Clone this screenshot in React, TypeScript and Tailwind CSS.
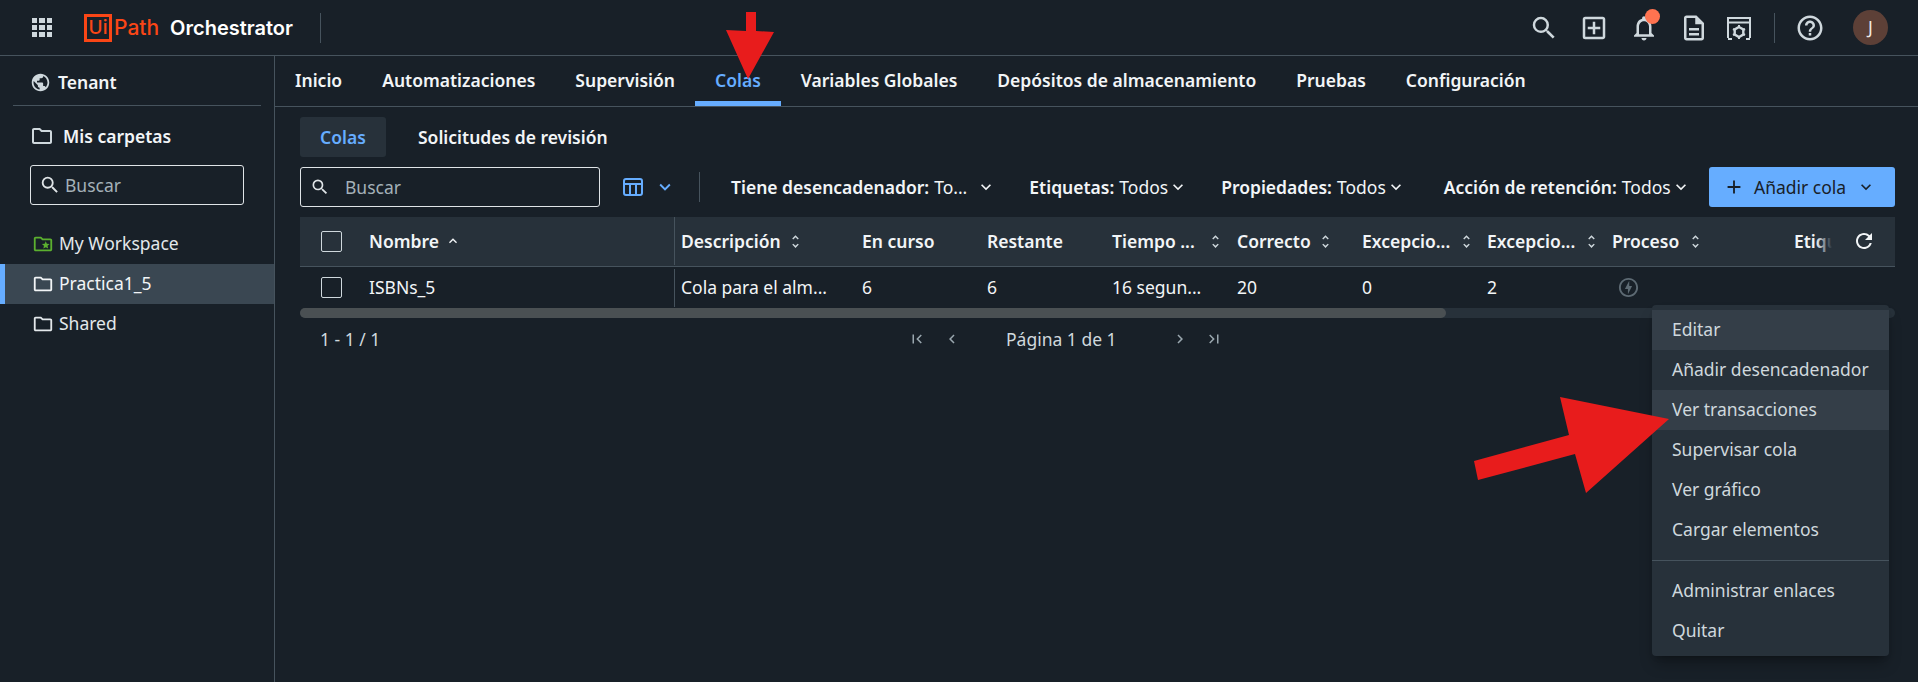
import type { ReactNode } from 'react'
import {
  MdAdd,
  MdChevronLeft,
  MdChevronRight,
  MdFirstPage,
  MdKeyboardArrowDown,
  MdKeyboardArrowUp,
  MdLastPage,
  MdOutlineAddBox,
  MdOutlineDescription,
  MdOutlineFolder,
  MdOutlineFolderSpecial,
  MdOutlineHelpOutline,
  MdOutlineNotifications,
  MdOutlineOfflineBolt,
  MdPublic,
  MdRefresh,
  MdSearch,
  MdUnfoldMore,
} from 'react-icons/md'

function AppsIcon() {
  return (
    <div className="grid w-5 grid-cols-3 gap-[2px]">
      {Array.from({ length: 9 }).map((_, i) => (
        <div key={i} className="h-[5px] w-[5.3px] bg-[#cfd8dd]" />
      ))}
    </div>
  )
}

function SystemIcon() {
  return (
    <svg viewBox="0 0 24 24" className="h-[24px] w-[24px] text-[#cfd8dd]" fill="none" stroke="currentColor" strokeWidth="2">
      <path d="M1 22V2h22v20" />
      <path d="M1 6.5h22" />
      <path d="M1 23h4M19 23h4" />
      <polygon points="12,11 16.3,13.5 16.3,18.5 12,21 7.7,18.5 7.7,13.5" strokeWidth="2.4" />
      <path d="M12 9v2M12 21v2M6 13l2 1M18 13l-2 1M6 19l2-1M18 19l-2-1" strokeWidth="2" />
    </svg>
  )
}

function Logo() {
  return (
    <div className="flex items-center font-['Inter',sans-serif] font-medium text-[#fa4616]">
      <span className="flex h-[28px] w-[28px] items-center justify-center border-[3px] border-[#fa4616] text-[19px] leading-none">
        Ui
      </span>
      <span className="ml-[2px] text-[21px] leading-none">Path</span>
    </div>
  )
}

function TopBar() {
  return (
    <header className="flex h-[56px] shrink-0 items-center border-b border-[#46535d] pl-[32px] pr-[30px]">
      <AppsIcon />
      <div className="ml-[32px]">
        <Logo />
      </div>
      <span className="ml-[11px] font-['Inter',sans-serif] text-[20px] font-semibold text-white">Orchestrator</span>
      <div className="ml-[27px] h-[30px] w-px bg-[#46535d]" />
      <div className="ml-auto flex items-center text-[#cfd8dd]">
        <MdSearch className="h-[30px] w-[30px]" />
        <MdOutlineAddBox className="ml-[20px] h-[30px] w-[30px]" />
        <div className="relative ml-[20px]">
          <MdOutlineNotifications className="h-[30px] w-[30px]" />
          <div className="absolute right-[-1px] top-[-4px] h-[15px] w-[15px] rounded-full bg-[#ff7350]" />
        </div>
        <MdOutlineDescription className="ml-[20px] h-[30px] w-[30px]" />
        <div className="ml-[18px]">
          <SystemIcon />
        </div>
        <div className="ml-[23px] h-[30px] w-px bg-[#46535d]" />
        <MdOutlineHelpOutline className="ml-[20px] h-[30px] w-[30px]" />
        <div className="ml-[28px] flex h-[35px] w-[35px] items-center justify-center rounded-full bg-[#5d4037] text-[17.5px] text-[#f0e9e6]">
          J
        </div>
      </div>
    </header>
  )
}

function FolderRow({ icon, label, active }: { icon: ReactNode; label: string; active?: boolean }) {
  return (
    <div
      className={`flex h-[40px] items-center gap-[5px] border-l-[5px] pb-[1px] pl-[27px] text-[17.5px] ${
        active ? 'border-[#66adff] bg-[#3a4752] text-[#f2f5f7]' : 'border-transparent text-[#e3e8eb]'
      }`}
    >
      {icon}
      {label}
    </div>
  )
}

function Sidebar() {
  return (
    <aside className="flex w-[275px] shrink-0 flex-col border-r border-[#46535d]">
      <div className="mx-[13px] flex h-[50px] items-center gap-[7px] border-b border-[#46535d] pl-[17px] pt-[3px] text-[17.5px] font-semibold text-[#f2f5f7]">
        <MdPublic className="h-[21px] w-[21px] text-[#cfd8dd]" />
        Tenant
      </div>
      <div className="mt-[10px] flex h-[40px] items-center gap-[9px] pl-[30px] text-[17.5px] font-semibold text-[#f2f5f7]">
        <MdOutlineFolder className="h-[24px] w-[24px] text-[#cfd8dd]" />
        Mis carpetas
      </div>
      <div className="mx-[30px] mt-[9px] flex h-[40px] items-center gap-[4px] rounded-[3px] border border-[#dfe4e7] pl-[8px] text-[17.5px] text-[#a4b1b8]">
        <MdSearch className="h-[22px] w-[22px] text-[#dfe4e7]" />
        Buscar
      </div>
      <div className="mt-[19px]">
        <FolderRow label="My Workspace" icon={<MdOutlineFolderSpecial className="h-[22px] w-[22px] text-[#5bb02f]" />} />
        <FolderRow label="Practica1_5" active icon={<MdOutlineFolder className="h-[22px] w-[22px] text-[#f2f5f7]" />} />
        <FolderRow label="Shared" icon={<MdOutlineFolder className="h-[22px] w-[22px] text-[#e3e8eb]" />} />
      </div>
    </aside>
  )
}

const mainTabs = [
  'Inicio',
  'Automatizaciones',
  'Supervisión',
  'Colas',
  'Variables Globales',
  'Depósitos de almacenamiento',
  'Pruebas',
  'Configuración',
]

function MainTabs() {
  return (
    <nav className="flex h-[51px] shrink-0 border-b border-[#46535d]">
      {mainTabs.map((tab) => (
        <div
          key={tab}
          className={`flex items-center border-b-[5px] px-[20px] pt-[4px] text-[17.5px] font-semibold ${
            tab === 'Colas' ? 'border-[#66adff] text-[#66adff]' : 'border-transparent text-[#f2f5f7]'
          }`}
        >
          {tab}
        </div>
      ))}
    </nav>
  )
}

function Filter({ name, value, className, chevronGap = '' }: { name: string; value: string; className: string; chevronGap?: string }) {
  return (
    <div className={`flex items-center text-[17.5px] text-[#f2f5f7] ${className}`}>
      <span className="font-semibold">{name}:</span>
      <span className="ml-[5px]">{value}</span>
      <MdKeyboardArrowDown className={`h-[20px] w-[20px] ${chevronGap}`} />
    </div>
  )
}

function Toolbar() {
  return (
    <div className="mt-[10px] flex h-[40px] items-center">
      <div className="flex h-[40px] w-[300px] items-center rounded-[3px] border border-[#dfe4e7] pl-[9px] text-[17.5px] text-[#a4b1b8]">
        <MdSearch className="h-[20px] w-[20px] text-[#dfe4e7]" />
        <span className="ml-[15px]">Buscar</span>
      </div>
      <svg viewBox="0 0 20 20" className="ml-[23px] h-[20px] w-[20px] text-[#66adff]" fill="none" stroke="currentColor" strokeWidth="2">
        <rect x="1" y="2" width="18" height="16" rx="2" />
        <path d="M1 7h18M7 7v11M13 7v11" />
      </svg>
      <MdKeyboardArrowDown className="ml-[11px] h-[22px] w-[22px] text-[#66adff]" />
      <div className="ml-[23px] h-[30px] w-px bg-[#46535d]" />
      <Filter name="Tiene desencadenador" value="To..." className="ml-[31px]" chevronGap="ml-[9px]" />
      <Filter name="Etiquetas" value="Todos" className="ml-[33px]" />
      <Filter name="Propiedades" value="Todos" className="ml-[33px]" />
      <Filter name="Acción de retención" value="Todos" className="ml-[38px]" />
      <div className="ml-auto flex h-[40px] w-[186px] items-center rounded-[3px] bg-[#66adff] pl-[14px] text-[17.5px] text-[#182028]">
        <MdAdd className="h-[22px] w-[22px]" />
        <span className="ml-[9px]">Añadir cola</span>
        <MdKeyboardArrowDown className="ml-[10px] h-[20px] w-[20px]" />
      </div>
    </div>
  )
}

const columns = [
  { label: 'Descripción', width: 'w-[181px]', sortGap: 'ml-[6px]' },
  { label: 'En curso', width: 'w-[125px]' },
  { label: 'Restante', width: 'w-[125px]' },
  { label: 'Tiempo ...', width: 'w-[125px]', sortGap: 'ml-[12px]' },
  { label: 'Correcto', width: 'w-[125px]', sortGap: 'ml-[6px]' },
  { label: 'Excepcio...', width: 'w-[125px]', sortGap: 'ml-[8px]' },
  { label: 'Excepcio...', width: 'w-[125px]', sortGap: 'ml-[8px]' },
  { label: 'Proceso', width: 'w-[125px]', sortGap: 'ml-[8px]' },
]
const cells = ['Cola para el alm...', '6', '6', '16 segun...', '20', '0', '2']

function Table() {
  return (
    <div className="relative mt-[10px] overflow-hidden">
      <div className="flex h-[50px] items-center border-b border-[#46535d] bg-[#27313a] pb-[1px] text-[17.5px] font-semibold text-[#f2f5f7]">
        <div className="flex h-full w-[375px] shrink-0 items-center border-r border-[#46535d] pl-[21px]">
          <div className="h-[21px] w-[21px] rounded-[2px] border border-[#cfd8dd]" />
          <span className="ml-[27px]">Nombre</span>
          <MdKeyboardArrowUp className="ml-[6px] h-[16px] w-[16px]" />
        </div>
        {columns.map((col, i) => (
          <div key={i} className={`flex shrink-0 items-center pl-[6px] ${col.width}`}>
            <span className="whitespace-nowrap">{col.label}</span>
            {col.sortGap && <MdUnfoldMore className={`h-[17px] w-[17px] text-[#cfd8dd] ${col.sortGap}`} />}
          </div>
        ))}
        <div className="relative ml-[63px] w-[38px]">
          <div className="overflow-hidden whitespace-nowrap">Etiquetas</div>
          <div className="absolute right-0 top-0 h-full w-[16px] bg-gradient-to-r from-transparent to-[#27313a]" />
        </div>
        <MdRefresh className="ml-[20px] h-[24px] w-[24px]" />
      </div>
      <div className="flex h-[41px] items-center text-[17.5px] text-[#f2f5f7]">
        <div className="flex h-[38px] w-[375px] shrink-0 items-center border-r border-[#46535d] pl-[21px]">
          <div className="h-[21px] w-[21px] rounded-[2px] border border-[#cfd8dd]" />
          <span className="ml-[27px]">ISBNs_5</span>
        </div>
        {cells.map((cell, i) => (
          <div key={i} className={`shrink-0 whitespace-nowrap pl-[6px] ${i === 0 ? 'w-[181px]' : 'w-[125px]'}`}>
            {cell}
          </div>
        ))}
        <div className="pl-[11px]">
          <MdOutlineOfflineBolt className="h-[23px] w-[23px] text-[#5d6a73]" />
        </div>
      </div>
      <div className="h-[10px] rounded-full bg-[#27313a]">
        <div className="h-[10px] w-[1146px] rounded-full bg-[#4a5053]" />
      </div>
    </div>
  )
}

function Pagination() {
  return (
    <div className="mt-[10px] flex h-[22px] items-center text-[17.5px] text-[#cfd8dd]">
      <span className="ml-[20px] w-[588px]">1 - 1 / 1</span>
      <MdFirstPage className="h-[18px] w-[18px] text-[#9aa7af]" />
      <MdChevronLeft className="ml-[17px] h-[18px] w-[18px] text-[#9aa7af]" />
      <span className="ml-[45px] whitespace-nowrap">Página 1 de 1</span>
      <MdChevronRight className="ml-[54px] h-[18px] w-[18px] text-[#9aa7af]" />
      <MdLastPage className="ml-[16px] h-[18px] w-[18px] text-[#9aa7af]" />
    </div>
  )
}

const menuTop = [
  { label: 'Editar', hover: true },
  { label: 'Añadir desencadenador' },
  { label: 'Ver transacciones', hover: true },
  { label: 'Supervisar cola' },
  { label: 'Ver gráfico' },
  { label: 'Cargar elementos' },
]

function MenuItem({ label, hover }: { label: string; hover?: boolean }) {
  return (
    <div className={`flex h-[40px] items-center whitespace-nowrap pb-[1px] pl-[20px] text-[17.5px] text-[#cfd8dd] ${hover ? 'bg-[#343e48]' : ''}`}>
      {label}
    </div>
  )
}

function RowMenu() {
  return (
    <div className="absolute left-[1652px] top-[305px] w-[237px] rounded-[4px] bg-[#27313a] py-[5px] shadow-lg shadow-black/30">
      {menuTop.map((item) => (
        <MenuItem key={item.label} {...item} />
      ))}
      <div className="my-[10px] h-px bg-[#46535d]" />
      <MenuItem label="Administrar enlaces" />
      <MenuItem label="Quitar" />
    </div>
  )
}

function Arrows() {
  return (
    <svg className="pointer-events-none absolute left-0 top-0" width="1918" height="682" fill="#e81c1c">
      <polygon points="1560,397 1669,419 1586,493 1575,454 1478,480 1474,461 1569,435" />
      <polygon points="746,12 756,12 756,31 774,32 748,79 726,30 746,31" />
    </svg>
  )
}

export default function App() {
  return (
    <div className="relative flex h-[682px] w-[1918px] flex-col overflow-hidden bg-[#182028] font-['Noto_Sans',sans-serif]">
      <TopBar />
      <div className="flex flex-1">
        <Sidebar />
        <main className="flex flex-1 flex-col">
          <MainTabs />
          <div className="pl-[25px] pr-[23px] pt-[10px]">
            <div className="flex h-[40px] items-center text-[17.5px] font-semibold">
              <div className="flex h-[40px] w-[86px] items-center justify-center rounded-[3px] bg-[#27313a] text-[#66adff]">
                Colas
              </div>
              <div className="ml-[32px] text-[#f2f5f7]">Solicitudes de revisión</div>
            </div>
            <Toolbar />
            <Table />
            <Pagination />
          </div>
        </main>
      </div>
      <RowMenu />
      <Arrows />
    </div>
  )
}
